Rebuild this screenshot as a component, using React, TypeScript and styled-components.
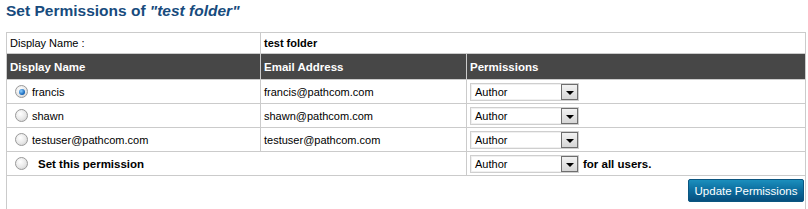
import React from "react";
import styled, { createGlobalStyle } from "styled-components";

const Global = createGlobalStyle`
  html, body { margin: 0; padding: 0; background: #fff; }
  body { font-family: "Liberation Sans", Arial, sans-serif; font-size: 11px; color: #000; }
`;

const Page = styled.div`
  padding: 0 3px 0 6px;
  width: 800px;
`;

const Title = styled.h1`
  margin: 0;
  height: 32px;
  padding-top: 1px;
  box-sizing: border-box;
  font-size: 15.5px;
  font-weight: bold;
  color: #174b7d;
  line-height: 20px;
  em { font-style: italic; }
`;

const Table = styled.table`
  width: 800px;
  border-collapse: collapse;
  border: 1px solid #cbcbcb;
  table-layout: fixed;
`;

const Cell = styled.td<{ $bold?: boolean; $h?: number }>`
  border: 1px solid #cbcbcb;
  padding: 0 3px;
  height: ${(p) => p.$h ?? 23}px;
  font-weight: ${(p) => (p.$bold ? "bold" : "normal")};
  vertical-align: middle;
  white-space: nowrap;
`;

const Head = styled.th`
  background: #474747;
  color: #fff;
  font-weight: bold;
  text-align: left;
  padding: 0 3px;
  height: 25px;
  border: 1px solid #cbcbcb;
  font-size: 11.5px;
`;

const RadioLabel = styled.label<{ $bold?: boolean }>`
  display: flex;
  align-items: center;
  gap: ${(p) => (p.$bold ? 10 : 4)}px;
  padding-left: 5px;
  font-weight: ${(p) => (p.$bold ? "bold" : "normal")};
  font-size: ${(p) => (p.$bold ? 11.5 : 11)}px;
`;

const Radio = styled.span<{ $checked?: boolean }>`
  width: 11px;
  height: 11px;
  border-radius: 50%;
  border: 1px solid #9a9a9a;
  background: radial-gradient(circle at 40% 35%, #ffffff 0%, #e8e8e8 55%, #c8c8c8 100%);
  display: inline-flex;
  align-items: center;
  justify-content: center;
  flex: none;
  &::after {
    content: "";
    display: ${(p) => (p.$checked ? "block" : "none")};
    width: 6px;
    height: 6px;
    border-radius: 50%;
    background: radial-gradient(circle at 35% 35%, #8fd0ff 0%, #1d6fc2 60%, #0b3f7a 100%);
  }
`;

const SelectRow = styled.div`
  display: flex;
  align-items: center;
  gap: 4px;
  font-size: 11.5px;
`;

const Select = styled.div`
  width: 109px;
  height: 18px;
  box-sizing: border-box;
  border: 1px solid #cfcfcf;
  box-shadow: inset 0 0 0 1px #f0f0f0;
  display: flex;
  align-items: center;
  justify-content: space-between;
  background: #fff;
  padding-left: 4px;
  font-size: 11px;
`;

const Arrow = styled.span`
  width: 17px;
  height: 16px;
  box-sizing: border-box;
  border: 1px solid #6e6e6e;
  background: linear-gradient(#f2f2f2, #d6d6d6);
  display: flex;
  align-items: center;
  justify-content: center;
  &::after {
    content: "";
    border-left: 4px solid transparent;
    border-right: 4px solid transparent;
    border-top: 4px solid #000;
    margin-top: 2px;
  }
`;

const Footer = styled.div`
  display: flex;
  justify-content: flex-end;
  align-items: flex-start;
  height: 36px;
  padding-top: 3px;
  box-sizing: border-box;
`;

const Button = styled.button`
  width: 116px;
  height: 23px;
  border: 1px solid #0b5580;
  border-radius: 2px;
  background: linear-gradient(#1b8fbd 0%, #0c6c9e 50%, #064f7e 100%);
  color: #fff;
  font-family: "Liberation Sans", Arial, sans-serif;
  font-size: 11.5px;
  padding: 0;
`;

const users = [
  { name: "francis", email: "francis@pathcom.com", checked: true },
  { name: "shawn", email: "shawn@pathcom.com" },
  { name: "testuser@pathcom.com", email: "testuser@pathcom.com" },
];

const PermSelect = () => (
  <Select>
    <span>Author</span>
    <Arrow />
  </Select>
);

export default function App() {
  return (
    <Page>
      <Global />
      <Title>
        Set Permissions of <em>"test folder"</em>
      </Title>
      <Table>
        <colgroup>
          <col style={{ width: 254 }} />
          <col style={{ width: 206 }} />
          <col />
        </colgroup>
        <tbody>
          <tr>
            <Cell $h={20}>Display Name :</Cell>
            <Cell $bold colSpan={2} $h={20}>test folder</Cell>
          </tr>
          <tr>
            <Head>Display Name</Head>
            <Head>Email Address</Head>
            <Head>Permissions</Head>
          </tr>
          {users.map((u) => (
            <tr key={u.name}>
              <Cell>
                <RadioLabel>
                  <Radio $checked={u.checked} />
                  {u.name}
                </RadioLabel>
              </Cell>
              <Cell>{u.email}</Cell>
              <Cell>
                <PermSelect />
              </Cell>
            </tr>
          ))}
          <tr>
            <Cell colSpan={2}>
              <RadioLabel $bold>
                <Radio />
                Set this permission
              </RadioLabel>
            </Cell>
            <Cell>
              <SelectRow>
                <PermSelect />
                <b>for all users.</b>
              </SelectRow>
            </Cell>
          </tr>
          <tr>
            <Cell colSpan={3} $h={36} style={{ verticalAlign: "top", paddingRight: 1 }}>
              <Footer>
                <Button>Update Permissions</Button>
              </Footer>
            </Cell>
          </tr>
        </tbody>
      </Table>
    </Page>
  );
}
